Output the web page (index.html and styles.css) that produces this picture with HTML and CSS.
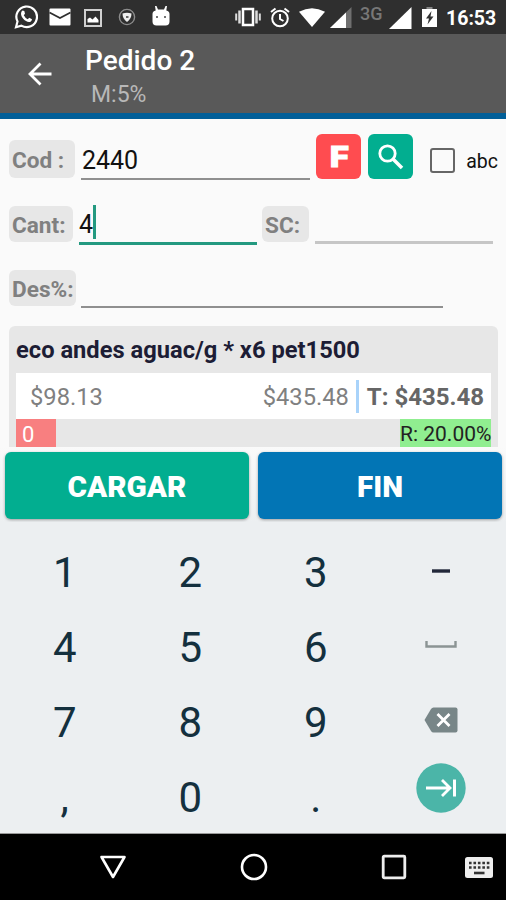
FILE: index.html
```
<!DOCTYPE html>
<html lang="es">
<head>
    <meta charset="utf-8">
    <title>Pedido 2</title>
    <link rel="stylesheet" href="styles.css">
</head>
<body>
    <div class="status">
        <svg class="whatsapp" width="24" height="25" viewBox="0 0 24 25"><path d="M2 23.200 3.500 17.500A10.300 10.300 0 1 1 7.300 21.600Z" fill="none" stroke="#fff" stroke-width="2.200"/><path d="M8.500 6.500 10.300 7 11 9.800 9.800 11.300Q11 13.900 13.700 15.200L15.300 13.700 18 15.200Q17.500 18 15 18C11 18 7 13 7 9.800Q7 7.500 8.500 6.500Z" fill="#fff"/></svg>
        <svg class="mail" width="22" height="18" viewBox="0 0 22 18"><rect x=".5" y=".5" width="21" height="17" rx="1" fill="#fff"/><path d="M.5 4.500 11 10 21.500 4.500" fill="none" stroke="#2f2f2f" stroke-width="1.800"/></svg>
        <svg class="photo" width="18" height="18" viewBox="0 0 18 18"><rect x="1" y="1" width="16" height="16" fill="none" stroke="#d0d0d0" stroke-width="2"/><path d="M3.500 13.500V10L6 8.500 8.500 10.500 11.500 7.500 14.500 11V13.500Z" fill="#fff"/></svg>
        <svg class="shield" width="18" height="18" viewBox="0 0 18 18"><circle cx="9" cy="9" r="7.600" fill="none" stroke="#8d8d8d" stroke-width="1.400"/><path d="M4.500 5.500Q9 4 13.500 5.500 13.500 11 9 14 4.500 11 4.500 5.500Z" fill="#eee"/><path d="M8 8H10.500V10H8Z" fill="#666"/></svg>
        <svg class="robot" width="18" height="20" viewBox="0 0 18 20"><path d="M3 0H4.500L6 3.500H12L13.500 0H15L14.300 4.500Q17.500 5 17.500 8V15.500Q17.500 19.500 13.500 19.500H4.500Q.5 19.500 .5 15.500V8Q.5 5 3.700 4.500Z" fill="#fff"/><circle cx="5" cy="11" r="1" fill="#444"/><circle cx="13" cy="11" r="1" fill="#444"/></svg>
        <span class="spacer"></span>
        <svg class="vibrate" width="26" height="20" viewBox="0 0 26 20"><rect x="8" y="2" width="10" height="16" fill="none" stroke="#fff" stroke-width="2.500"/><path d="M4.500 3.500V16.500M21.500 3.500V16.500" stroke="#ddd" stroke-width="2.500"/><path d="M1.200 6.500V13.500M24.800 6.500V13.500" stroke="#ddd" stroke-width="2"/></svg>
        <svg class="alarm" width="20" height="21" viewBox="0 0 20 21"><circle cx="10" cy="11.500" r="7.800" fill="none" stroke="#fff" stroke-width="2"/><path d="M1 5 5.500 1.500M19 5 14.500 1.500M10 7V12L13.500 14" fill="none" stroke="#fff" stroke-width="2"/></svg>
        <svg class="wifi" width="26" height="19" viewBox="0 0 26 19"><path d="M0 3.800Q13-3.500 26 3.800L13 19Z" fill="#fff"/></svg>
        <svg class="signal" width="22" height="21" viewBox="0 0 22 21"><path d="M0 21 21.500 0V21Z" fill="#6f6f6f"/><path d="M0 21 16 5.500V21Z" fill="#fff"/></svg>
        <span class="net">3G</span>
        <svg class="signal2" width="23" height="22" viewBox="0 0 23 22"><path d="M0 22 22.500 0V22Z" fill="#fff"/></svg>
        <svg class="battery" width="15" height="20" viewBox="0 0 15 20"><path d="M4.500 0H10.500V2H4.500Z" fill="#888"/><path d="M0 2H15V20H0Z" fill="#fff"/><path d="M9.500 4 4 11.500H7L5.500 17.500 11.500 9.500H8.500Z" fill="#333"/></svg>
        <span class="clock">16:53</span>
    </div>

    <div class="toolbar">
        <svg class="back" width="24" height="24" viewBox="0 0 24 24"><path d="M23.500 12H2.500M12.500 1.500 2 12 12.500 22.500" fill="none" stroke="#fff" stroke-width="2.800"/></svg>
        <div class="titles">
            <div class="title">Pedido 2</div>
            <div class="subtitle">M:5%</div>
        </div>
    </div>

    <div class="form">
        <div class="row row-cod">
            <label class="tag tag-cod">Cod :</label>
            <div class="field field-cod">2440</div>
            <button class="square red"><span class="wide">F</span></button>
            <button class="square green"><svg width="28" height="28" viewBox="0 0 28 28"><circle cx="10.500" cy="10.500" r="7.700" fill="none" stroke="#fff" stroke-width="2.800"/><path d="M16 16 25 25" stroke="#fff" stroke-width="3.600"/></svg></button>
            <span class="check"></span>
            <span class="check-label">abc</span>
        </div>
        <div class="row row-cant">
            <label class="tag tag-cant">Cant:</label>
            <div class="field field-cant">4<span class="cursor"></span></div>
            <label class="tag tag-sc">SC:</label>
            <div class="field field-sc"></div>
        </div>
        <div class="row row-des">
            <label class="tag tag-des">Des%:</label>
            <div class="field field-des"></div>
        </div>

        <div class="card">
            <div class="name">eco andes aguac/g * x6 pet1500</div>
            <div class="prices">
                <span class="unit">$98.13</span>
                <span class="sub">$435.48</span>
                <span class="bar"></span>
                <span class="total">T: $435.48</span>
            </div>
            <div class="extra">
                <span class="stock">0</span>
                <span class="rent">R: 20.00%</span>
            </div>
        </div>
    </div>

    <div class="actions">
        <button class="btn green">CARGAR</button>
        <button class="btn blue">FIN</button>
    </div>

    <div class="keyboard">
        <div class="key">1</div>
        <div class="key">2</div>
        <div class="key">3</div>
        <div class="key minus"><svg width="18" height="4" viewBox="0 0 18 4"><path d="M0 2H18" stroke="#22283a" stroke-width="3.400"/></svg></div>
        <div class="key">4</div>
        <div class="key">5</div>
        <div class="key">6</div>
        <div class="key space"><svg width="32" height="8" viewBox="0 0 32 8"><path d="M1.500 0V5.500H30.500V0" fill="none" stroke="#8b9494" stroke-width="2.400"/></svg></div>
        <div class="key">7</div>
        <div class="key">8</div>
        <div class="key">9</div>
        <div class="key del"><svg width="34" height="26" viewBox="0 0 34 26"><path d="M9.500 .5H31.500Q33.500 .5 33.500 2.500V23.500Q33.500 25.500 31.500 25.500H9.500Q8 25.500 7 24L.5 13 7 2Q8 .5 9.500 .5Z" fill="#788688"/><path d="M13.500 7 25.500 19M25.500 7 13.500 19" stroke="#fff" stroke-width="2.800"/></svg></div>
        <div class="key">,</div>
        <div class="key">0</div>
        <div class="key">.</div>
        <div class="key next"><svg width="50" height="50" viewBox="0 0 50 50"><circle cx="25" cy="25" r="24.700" fill="#4bb5a8"/><path d="M10 25H34M26 17 34 25 26 33" fill="none" stroke="#fff" stroke-width="2.800"/><path d="M38.500 16.500V33.500" stroke="#fff" stroke-width="3"/></svg></div>
    </div>

    <div class="nav">
        <svg class="nav-back" width="28" height="25" viewBox="0 0 28 25"><path d="M2.500 2H25.500L14 22Z" fill="none" stroke="#fff" stroke-width="2.600" stroke-linejoin="round"/></svg>
        <svg class="nav-home" width="28" height="28" viewBox="0 0 28 28"><circle cx="14" cy="14" r="12" fill="none" stroke="#fff" stroke-width="2.600"/></svg>
        <svg class="nav-recent" width="26" height="26" viewBox="0 0 26 26"><rect x="2.200" y="2.200" width="21.600" height="21.600" rx="1" fill="none" stroke="#eee" stroke-width="2.800"/></svg>
        <svg class="nav-keys" width="28" height="21" viewBox="0 0 28 21"><rect width="28" height="21" rx="2.500" fill="#eee"/><path d="M4 6H24.500M4 10.500H24.500" stroke="#333" stroke-width="2.600" stroke-dasharray="2.600 1.850"/><path d="M9 16H19.500" stroke="#333" stroke-width="2.600"/></svg>
    </div>
</body>
</html>
```
FILE: styles.css
```
* { box-sizing: border-box; }
body { margin: 0; width: 506px; height: 900px; overflow: hidden; background: #fafafa; font-family: Roboto, sans-serif; display: flex; flex-direction: column; }
svg { display: block; flex: none; }
button { border: 0; padding: 0; font-family: inherit; color: #fff; }

.status { height: 34px; flex: none; background: #2f2f2f; display: flex; align-items: flex-start; padding: 0 11px 0 14px; color: #fff; }
.status .spacer { flex: 1; }
.whatsapp { margin-top: 4px; }
.mail { margin: 8px 0 0 11px; }
.photo { margin: 9px 0 0 13px; }
.shield { margin: 8px 0 0 16px; }
.robot { margin: 6px 0 0 16px; }
.vibrate { margin-top: 7px; }
.alarm { margin: 7px 0 0 9px; }
.wifi { margin: 8px 0 0 9px; }
.signal { margin: 7px 0 0 5px; }
.net { width: 24px; margin: 4px 0 0 8px; font-size: 18px; line-height: 19px; font-weight: 500; color: #777; }
.signal2 { margin: 7px 0 0 5px; }
.battery { margin: 7px 0 0 10px; }
.clock { width: 49px; margin: 8px 0 0 9px; font-size: 19.5px; line-height: 22px; font-weight: 700; white-space: nowrap; }

.toolbar { height: 85px; flex: none; background: #595959; border-bottom: 6px solid #025f98; display: flex; }
.back { margin: 28px 0 0 28px; }
.titles { margin: 11px 0 0 33px; }
.title { font-size: 28px; line-height: 32px; font-weight: 500; color: #fff; }
.subtitle { margin-left: 6px; padding-top: 2px; font-size: 23px; line-height: 32px; color: #b8b8b8; }

.form { height: 328px; flex: none; padding: 0 8px 0 9px; }
.row { display: flex; align-items: flex-start; height: 64px; }
.row-cod { height: 72px; padding-top: 15px; }
.tag { height: 36px; margin-top: 15px; padding-left: 3px; border-radius: 6px; background: #e7e7e7; color: #808080; font-size: 22.6px; line-height: 39px; font-weight: 700; white-space: nowrap; }
.tag-cod { width: 66px; height: 38px; margin-top: 6px; line-height: 41px; }
.tag-cant { width: 64px; }
.tag-sc { width: 47px; margin-left: 5px; }
.tag-des { width: 67px; }
.field { color: #111; font-size: 25px; border-bottom: 2px solid #8f8f8f; display: flex; }
.field-cod { width: 230px; height: 46px; margin-left: 6px; padding-left: 1px; line-height: 54px; }
.field-cant { width: 178px; height: 54px; margin-left: 6px; line-height: 68px; border-color: #239980; border-bottom-width: 3px; }
.field-sc { width: 178px; height: 53px; margin-left: 6px; border-color: #c6c6c6; border-bottom-width: 3px; }
.field-des { width: 362px; height: 53px; margin-left: 5px; }
.cursor { width: 3px; height: 34px; margin-top: 14px; background: #239980; }
.square { width: 45px; height: 45px; margin-left: 6px; border-radius: 6px; font-size: 30px; font-weight: 900; display: flex; align-items: center; justify-content: center; }
.square.green { margin-left: 7px; }
.wide { transform: scaleX(1.15); -webkit-text-stroke: 1px #fff; }
.red { background: #ff4c50; }
.green { background: #02ae90; }
.blue { background: #0275b5; }
.check { width: 25px; height: 25px; margin: 14px 0 0 17px; border: 2px solid #666; border-radius: 3px; }
.check-label { margin: 16px 0 0 11px; font-size: 19.5px; line-height: 24px; color: #111; }

.card { height: 121px; margin-top: 7px; padding: 0 7px; border-radius: 6px 6px 0 0; background: #e7e7e7; }
.name { height: 47px; font-size: 23.7px; line-height: 49px; font-weight: 700; color: #1d1d35; white-space: nowrap; }
.prices { height: 46px; background: #fff; display: flex; align-items: center; padding: 1px 7px 0 14px; font-size: 24px; color: #808080; white-space: nowrap; }
.unit { font-size: 23.7px; }
.sub { margin-left: auto; font-size: 23.7px; }
.bar { width: 3px; height: 33px; margin: 0 8px 0 7px; background: #a9d3fa; }
.total { font-weight: 700; color: #666; }
.extra { height: 28px; display: flex; justify-content: space-between; line-height: 31px; }
.stock { width: 40px; padding-left: 6px; background: #f87f80; color: #fff; font-size: 22px; }
.rent { width: 91px; background: #90ee90; color: #222; font-size: 21px; white-space: nowrap; }

.actions { height: 75px; flex: none; padding: 5px 4px 0 5px; display: flex; gap: 9px; background: linear-gradient(#fafafa, #eceff1); }
.btn { flex: 1; height: 67px; padding-top: 2px; border-radius: 6px; font-size: 29.7px; font-weight: 900; box-shadow: 0 1px 3px rgba(0, 0, 0, .35); }

.keyboard { height: 312px; flex: none; padding: 13px 2px 0; background: #eceff1; border-bottom: 1px solid #999; display: grid; grid-template-columns: repeat(4, 1fr); grid-template-rows: repeat(4, 75px); }
.key { display: flex; align-items: center; justify-content: center; font-size: 42px; color: #14303e; }
.minus { padding-bottom: 3px; }
.space { padding-bottom: 5px; }
.del { padding-bottom: 6px; }
.next { padding-bottom: 20px; }

.nav { flex: 1; background: #000; display: flex; align-items: flex-start; }
.nav-back { margin: 21px 0 0 99px; }
.nav-home { margin: 19px 0 0 113px; }
.nav-recent { margin: 20px 0 0 113px; }
.nav-keys { margin: 23px 0 0 58px; }
```
